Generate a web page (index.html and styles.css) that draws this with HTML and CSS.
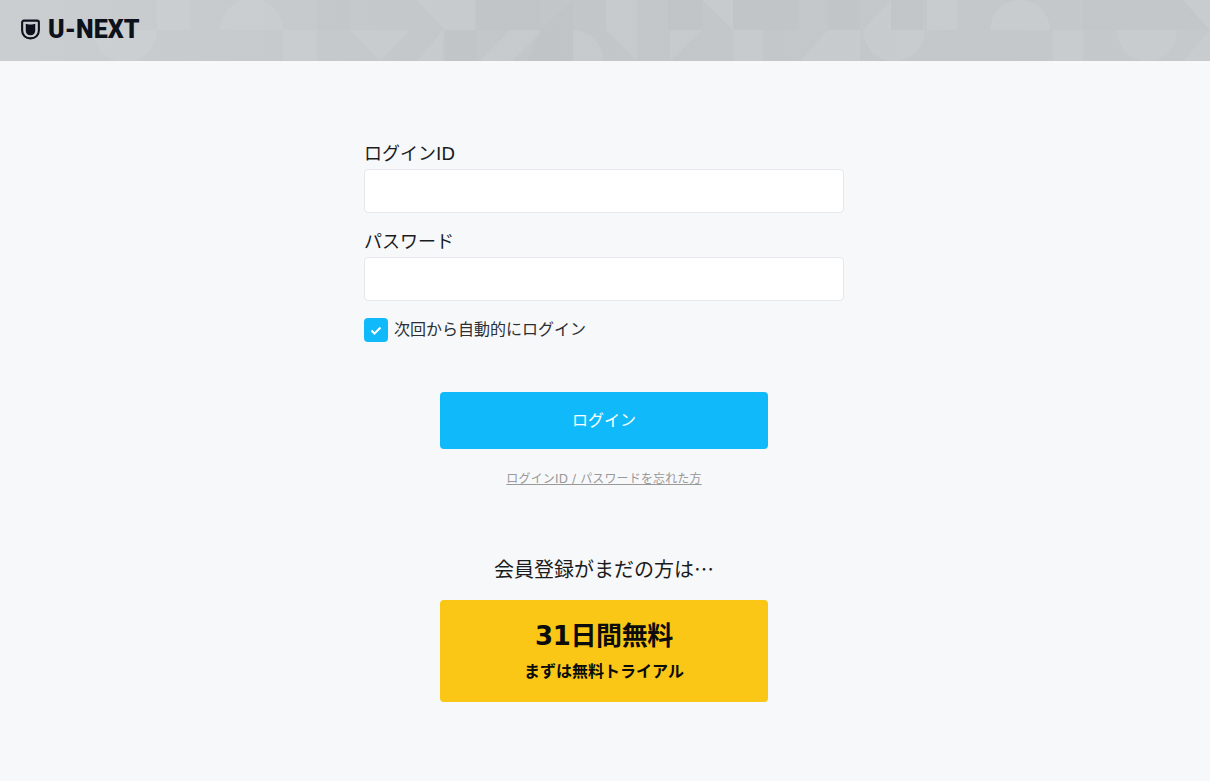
FILE: index.html
```html
<!DOCTYPE html>
<html lang="ja">
<head>
    <meta charset="UTF-8">
    <meta name="viewport" content="width=device-width, initial-scale=1.0">
    <title>U-NEXT ログイン</title>
    <link rel="stylesheet" href="styles.css">
</head>
<body>
    <header class="site-header">
        <svg class="header-pattern" viewBox="0 0 1210 61" preserveAspectRatio="none" aria-hidden="true">
            <!-- top row -->
            <rect class="tile-light" x="157" y="0" width="33" height="30"/>
            <path class="tile-light" d="M220 30A31.500 31.500 0 0 1 283 30Z"/>
            <rect class="tile-dark" x="317" y="0" width="33" height="30"/>
            <path class="tile-light" d="M417 0H475V30H445Z"/>
            <rect class="tile-dark" x="477" y="0" width="63" height="30"/>
            <path class="tile-dark" d="M540 30L573 0V30Z"/>
            <rect class="tile-light" x="606" y="0" width="31" height="30"/>
            <rect class="tile-dark" x="668" y="0" width="34" height="30"/>
            <path class="tile-light" d="M702 0H733V30Z"/>
            <rect class="tile-dark" x="733" y="0" width="66" height="30"/>
            <rect class="tile-dark" x="828" y="0" width="32" height="30"/>
            <path class="tile-light" d="M863 30L891 0V30Z"/>
            <rect class="tile-dark" x="891" y="0" width="32" height="30"/>
            <rect class="tile-light" x="927" y="0" width="30" height="30"/>
            <path class="tile-light" d="M990 30A30 30 0 0 1 1050 30Z"/>
            <path class="tile-dark" d="M1083 0H1183L1210 30H1083Z"/>
            <path class="tile-light" d="M1183 0H1210V30Z"/>
            <!-- bottom row -->
            <path class="tile-light" d="M93 30A32 32 0 0 0 157 30Z"/>
            <rect class="tile-light" x="283" y="30" width="34" height="31"/>
            <path class="tile-light" d="M350 30H410L380 61Z"/>
            <path class="tile-light" d="M417 61L443 30V61Z"/>
            <rect class="tile-dark" x="445" y="30" width="32" height="31"/>
            <path class="tile-light" d="M480 61L510 30H540V33L512 61Z"/>
            <path class="tile-dark" d="M540 30H573V61H528Z"/>
            <path class="tile-light" d="M573 61V30A30 30 0 0 1 603 61Z"/>
            <path class="tile-light" d="M606 30H637V61Z"/>
            <path class="tile-light" d="M670 30H702L670 61Z"/>
            <rect class="tile-light" x="733" y="30" width="30" height="31"/>
            <path class="tile-light" d="M800 61L828 30H860V61Z"/>
            <path class="tile-light" d="M863 30H925A31 31 0 0 1 863 30Z"/>
            <rect class="tile-light" x="1053" y="30" width="30" height="31"/>
            <path class="tile-light" d="M1117 30H1177A30 31 0 0 1 1117 30Z"/>
            <path class="tile-light" d="M1183 61L1210 30V61Z"/>
        </svg>
        <a class="logo" href="#">
            <svg class="logo-mark" viewBox="0 0 20 21" aria-hidden="true">
                <path class="shield-outer" d="M3 1.200H17A1.800 1.800 0 0 1 18.800 3V11.500C18.800 16.500 15 19.800 10 19.800C5 19.800 1.200 16.500 1.200 11.500V3A1.800 1.800 0 0 1 3 1.200Z"/>
                <path class="shield-inner" d="M5 4.500C7 5.500 13 5.500 15 4.500V11.500C15 14.500 13 16.500 10 16.500C7 16.500 5 14.500 5 11.500Z"/>
            </svg>
            <span class="logo-text">U-NEXT</span>
        </a>
    </header>

    <main class="login-page">
        <form class="login-form">
            <label class="field-label" for="loginId">ログインID</label>
            <input class="field-input" type="text" id="loginId">

            <label class="field-label" for="password">パスワード</label>
            <input class="field-input" type="password" id="password">

            <label class="auto-login">
                <span class="checkbox">
                    <svg viewBox="0 0 24 24" aria-hidden="true"><path d="M7.500 12.500L10.500 15.500L16.500 9.500"/></svg>
                </span>
                次回から自動的にログイン
            </label>

            <button class="login-btn" type="button">ログイン</button>
            <a class="forgot-link" href="#">ログインID / パスワードを忘れた方</a>

            <p class="signup-lead">会員登録がまだの方は…</p>
            <a class="trial-btn" href="#">
                <span class="trial-title">31日間無料</span>
                <span class="trial-sub">まずは無料トライアル</span>
            </a>
        </form>
    </main>
</body>
</html>
```

FILE: styles.css
```css
* {
    margin: 0;
    padding: 0;
    box-sizing: border-box;
    font-family: "DejaVu Sans", "Noto Sans CJK JP", sans-serif;
}

body {
    background: #f7f8fa;
    color: #1a1c21;
    min-height: 100vh;
    overflow: hidden;
}

/* Header */
.site-header {
    height: 61px;
    background: linear-gradient(90deg, #cbced1 0%, #c3c6c9 45%, #c6c9cc 100%);
    position: relative;
    display: flex;
    align-items: center;
    padding-left: 21px;
}

.header-pattern {
    position: absolute;
    top: 0;
    left: 0;
    width: 100%;
    height: 100%;
}

.tile-light {
    fill: #d8dde0;
    opacity: 0.18;
}

.tile-dark {
    fill: #4a5058;
    opacity: 0.02;
}

.logo {
    position: relative;
    display: flex;
    align-items: center;
    gap: 8px;
    color: #0c111c;
    text-decoration: none;
    margin-top: -2px;
}

.logo-mark {
    width: 19px;
    height: 21px;
}

.shield-outer {
    fill: none;
    stroke: #0c111c;
    stroke-width: 2.2;
}

.shield-inner {
    fill: #0c111c;
}

.logo-text {
    font-family: "Roboto", sans-serif;
    font-size: 25px;
    font-weight: 900;
    letter-spacing: 0.1px;
    line-height: 1;
}

/* Form */
.login-page {
    display: flex;
    justify-content: center;
    padding: 79px 2px 0 0;
}

.login-form {
    width: 480px;
    display: flex;
    flex-direction: column;
}

.field-label {
    font-size: 18px;
    line-height: 28px;
    margin-bottom: 1px;
}

.field-input {
    height: 44px;
    background: #fff;
    border: 1px solid #e6e8eb;
    border-radius: 4px;
    margin-bottom: 15px;
    font-size: 16px;
    padding: 0 12px;
}

.field-input:focus {
    outline: none;
    border-color: #10bafa;
}

.auto-login {
    display: flex;
    align-items: center;
    gap: 6px;
    font-size: 16px;
    line-height: 24px;
    color: #2b2e33;
    margin-top: 2px;
    cursor: pointer;
}

.checkbox {
    width: 24px;
    height: 24px;
    background: #10bafa;
    border-radius: 4px;
}

.checkbox svg {
    display: block;
    width: 24px;
    height: 24px;
}

.checkbox path {
    fill: none;
    stroke: #fff;
    stroke-width: 2;
}

.login-btn {
    width: 328px;
    height: 57px;
    align-self: center;
    margin-top: 50px;
    padding-bottom: 4px;
    background: #10bafa;
    color: #fff;
    border: none;
    border-radius: 4px;
    font-size: 16px;
    cursor: pointer;
}

.forgot-link {
    align-self: center;
    margin-top: 21px;
    font-size: 12px;
    line-height: 19px;
    letter-spacing: 0.15px;
    color: #999;
}

.signup-lead {
    text-align: center;
    font-family: "Noto Sans CJK JP", sans-serif;
    font-size: 20px;
    line-height: 30px;
    margin-top: 65px;
}

.trial-btn {
    width: 328px;
    height: 102px;
    align-self: center;
    margin-top: 16px;
    background: #fac716;
    border-radius: 4px;
    color: #0c0c0c;
    text-decoration: none;
    display: flex;
    flex-direction: column;
    align-items: center;
    justify-content: center;
    gap: 5px;
    padding-bottom: 1px;
    font-weight: 700;
}

.trial-title {
    font-size: 26px;
    line-height: 38px;
    font-weight: 700;
    letter-spacing: -0.4px;
}

.trial-sub {
    font-size: 16px;
    line-height: 24px;
    font-weight: 700;
}
```
